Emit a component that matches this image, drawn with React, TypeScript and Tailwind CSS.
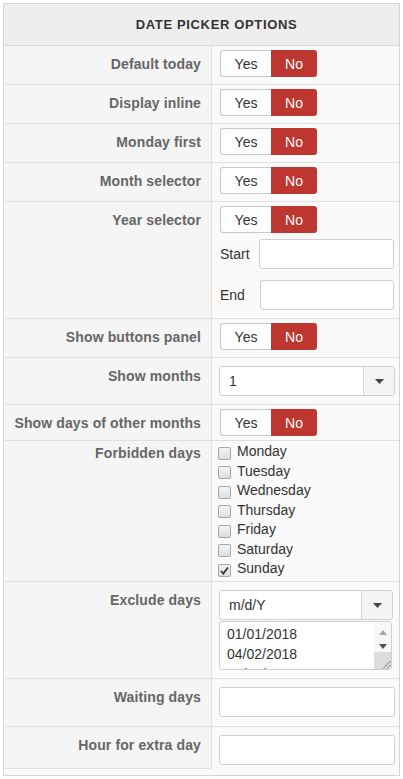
import React from "react";

const font = "font-['Liberation_Sans',Arial,Helvetica,sans-serif]";

function Toggle() {
  return (
    <div className="flex h-[27px] w-[97px] text-[14px] leading-none">
      <div className="w-[51px] flex items-center justify-center bg-white text-[#333] border border-r-0 border-[#c8c8c8] rounded-l-[3px]">
        Yes
      </div>
      <div className="flex-1 flex items-center justify-center bg-[#bd3630] text-white rounded-r-[3px]">
        No
      </div>
    </div>
  );
}

function Caret() {
  return (
    <svg width="9" height="5" viewBox="0 0 9 5">
      <path d="M0 0h9L4.5 5z" fill="#444" />
    </svg>
  );
}

function Select({ value, w }: { value: string; w: string }) {
  return (
    <div className={`flex h-[30px] ${w} bg-white border border-[#cfcfcf] rounded-[3px] text-[14px] text-[#333]`}>
      <div className="flex-1 flex items-center pl-[9px]">{value}</div>
      <div className="w-[31px] flex items-center justify-center bg-[#f4f4f4] border-l border-[#d5d5d5] rounded-r-[3px]">
        <Caret />
      </div>
    </div>
  );
}

function Input({ w }: { w: string }) {
  return <div className={`h-[30px] ${w} bg-white border border-[#cfcfcf] rounded-[3px]`} />;
}

function Label({ text, pt = "pt-[9px]", h = "" }: { text: string; pt?: string; h?: string }) {
  return (
    <div
      className={`w-[208px] shrink-0 bg-[#f5f5f5] border-r border-[#e0e0e0] text-right pr-[10px] ${pt} ${h} font-bold text-[14px] leading-[18px] tracking-[0.12px] text-[#666]`}
    >
      {text}
    </div>
  );
}

function ToggleRow({ label, h = "h-[39px]" }: { label: string; h?: string }) {
  return (
    <div className={`flex ${h} border-b border-[#e0e0e0]`}>
      <Label text={label} />
      <div className="flex-1 bg-[#fafafa] pl-[8px] pt-[4px]">
        <Toggle />
      </div>
    </div>
  );
}

const days = ["Monday", "Tuesday", "Wednesday", "Thursday", "Friday", "Saturday", "Sunday"];

function Checkbox({ checked }: { checked: boolean }) {
  return (
    <div className="w-[13px] h-[13px] mt-[3px] shrink-0 rounded-[2px] border border-[#a6a6a6] bg-gradient-to-b from-[#f4f4f4] to-[#dedede] flex items-center justify-center">
      {checked && (
        <svg width="9" height="9" viewBox="0 0 9 9">
          <path d="M1 5l2.3 2.5L8 1.5" stroke="#333" strokeWidth="1.8" fill="none" />
        </svg>
      )}
    </div>
  );
}

export default function App() {
  return (
    <div className={`${font} m-[3px] w-[397px] border border-[#d4d4d4] bg-[#fafafa]`}>
      {/* Header */}
      <div className="h-[42px] flex items-center justify-center pl-[30px] bg-[#eeeeee] border-b border-[#dadada] text-[13px] font-bold tracking-[0.65px] text-[#333]">
        DATE PICKER OPTIONS
      </div>

      <ToggleRow label="Default today" />
      <ToggleRow label="Display inline" />
      <ToggleRow label="Monday first" />
      <ToggleRow label="Month selector" />

      {/* Year selector */}
      <div className="flex h-[117px] border-b border-[#e0e0e0]">
        <Label text="Year selector" />
        <div className="flex-1 bg-[#fafafa] pl-[8px] pt-[4px] text-[14px] text-[#333]">
          <Toggle />
          <div className="flex items-center mt-[6px] h-[30px]">
            <span className="w-[39px]">Start</span>
            <Input w="w-[135px]" />
          </div>
          <div className="flex items-center mt-[11px] h-[30px]">
            <span className="w-[40px]">End</span>
            <Input w="w-[134px]" />
          </div>
        </div>
      </div>

      <ToggleRow label="Show buttons panel" />

      {/* Show months */}
      <div className="flex h-[47px] border-b border-[#e0e0e0]">
        <Label text="Show months" />
        <div className="flex-1 bg-[#fafafa] pl-[7px] pt-[8px]">
          <Select value="1" w="w-[176px]" />
        </div>
      </div>

      <ToggleRow label="Show days of other months" h="h-[36px]" />

      {/* Forbidden days */}
      <div className="flex h-[141px] border-b border-[#e0e0e0]">
        <Label text="Forbidden days" pt="pt-[3px]" />
        <div className="flex-1 bg-[#fafafa] pl-[6px] pt-[1px] text-[14px] text-[#333]">
          {days.map((d) => (
            <div key={d} className="flex items-center gap-[6px] h-[19.5px]">
              <Checkbox checked={d === "Sunday"} />
              <span className="leading-[19.5px]">{d}</span>
            </div>
          ))}
        </div>
      </div>

      {/* Exclude days */}
      <div className="flex h-[97px] border-b border-[#e0e0e0]">
        <Label text="Exclude days" />
        <div className="flex-1 bg-[#fafafa] pl-[7px] pt-[8px]">
          <Select value="m/d/Y" w="w-[174px]" />
          <div className="flex h-[49px] w-[173px] mt-[1px] bg-white border border-[#cfcfcf] rounded-[3px] overflow-hidden">
            <div className="flex-1 pl-[7px] pt-[2px] text-[14px] leading-[20px] text-[#333] overflow-hidden">
              <div>01/01/2018</div>
              <div>04/02/2018</div>
              <div>05/04/2018</div>
            </div>
            <div className="w-[17px] flex flex-col items-center bg-[#f7f7f7]">
              <div className="h-[15px] mt-[3px] flex items-center justify-center">
                <svg width="8" height="5" viewBox="0 0 8 5">
                  <path d="M4 0L8 5H0z" fill="#a8a8a8" />
                </svg>
              </div>
              <div className="h-[12px] flex items-center justify-center">
                <svg width="8" height="5" viewBox="0 0 8 5">
                  <path d="M0 0h8L4 5z" fill="#505050" />
                </svg>
              </div>
              <div className="mt-auto w-[17px] h-[17px] bg-[#dcdcdc] flex items-end justify-end">
                <svg width="9" height="9" viewBox="0 0 9 9">
                  <path d="M8.5 1L1 8.5M8.5 5L5 8.5" stroke="#777" strokeWidth="1" />
                </svg>
              </div>
            </div>
          </div>
        </div>
      </div>

      {/* Waiting days */}
      <div className="flex h-[48px] border-b border-[#e0e0e0]">
        <Label text="Waiting days" />
        <div className="flex-1 bg-[#fafafa] pl-[7px] pt-[8px]">
          <Input w="w-[176px]" />
        </div>
      </div>

      {/* Hour for extra day */}
      <div className="flex items-start h-[48px]">
        <div className="w-[208px] shrink-0 h-[42px] border-b border-[#e0e0e0]">
          <Label text="Hour for extra day" h="h-[41px]" />
        </div>
        <div className="flex-1 bg-[#fafafa] pl-[7px] pt-[8px]">
          <Input w="w-[176px]" />
        </div>
      </div>
    </div>
  );
}
